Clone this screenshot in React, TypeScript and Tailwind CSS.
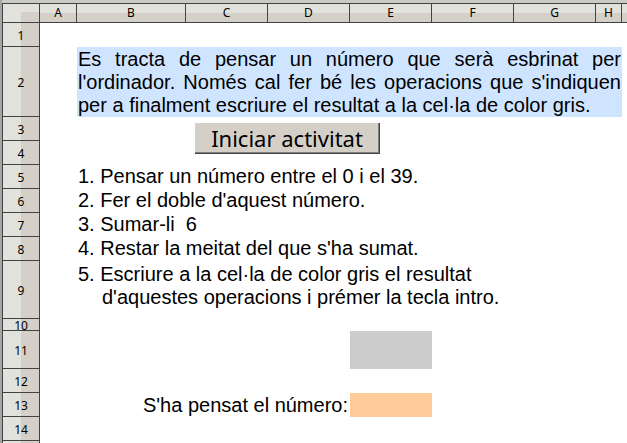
import type { ReactNode } from "react";

const columns = ["A", "B", "C", "D", "E", "F", "G", "H"];

const columnHeader =
  "h-[19px] border-r border-b border-[#424242] p-0 text-center font-normal leading-[18px] bg-linear-to-b from-[#e2e2dc] from-50% to-[#d4d0c8] to-50%";

function Row({
  number,
  height,
  children,
}: {
  number: number;
  height: string;
  children?: ReactNode;
}) {
  return (
    <tr className={height}>
      <th
        scope="row"
        className="border-r border-b border-[#424242] bg-linear-to-r from-[#e2e2dc] from-50% to-[#d4d0c8] to-50% p-0 pt-0.5 text-center align-middle font-normal leading-[9px]"
      >
        {number}
      </th>
      {children}
    </tr>
  );
}

function Step({ children }: { children: ReactNode }) {
  return (
    <>
      <td />
      <td colSpan={7} className="p-0 pl-px align-top whitespace-pre">
        {children}
      </td>
    </>
  );
}

export default function App() {
  return (
    <main className="min-h-screen overflow-hidden border-l-2 border-[#a5a5a5] bg-white text-black">
      <div className="h-[3px] bg-[#cbc9c3]" />
      <table className="w-full table-fixed border-separate border-spacing-0 border-t border-l border-[#424242] font-['Liberation_Sans',Arial,sans-serif] text-[20px] leading-[23px] [&_th]:font-['Noto_Sans',sans-serif] [&_th]:text-[12px]">
        <colgroup>
          <col className="w-[37px]" />
          <col className="w-[37px]" />
          <col className="w-[109px]" />
          <col className="w-[82px]" />
          <col className="w-[82px]" />
          <col className="w-[82px]" />
          <col className="w-[82px]" />
          <col className="w-[82px]" />
          <col className="w-[26px]" />
          <col />
        </colgroup>
        <thead>
          <tr>
            <td className="h-[19px] border-r border-b border-[#424242] bg-[#e2e2dc] p-0">
              <div className="ml-auto mt-2 h-2.5 w-1/2 bg-[#d4d0c8]" />
            </td>
            {columns.map((name) => (
              <th key={name} scope="col" className={columnHeader}>
                {name}
              </th>
            ))}
            <td className="border-b border-[#424242] bg-linear-to-b from-[#e2e2dc] from-50% to-[#d4d0c8] to-50% p-0" />
          </tr>
        </thead>
        <tbody>
          <Row number={1} height="h-6" />
          <Row number={2} height="h-[70px]">
            <td />
            <td colSpan={7} className="bg-[#cfe5ff] p-0 px-px pt-px text-justify align-top">
              Es tracta de pensar un número que serà esbrinat per l'ordinador. Només cal fer bé les
              operacions que s'indiquen per a finalment escriure el resultat a la cel·la de color gris.
            </td>
          </Row>
          <Row number={3} height="h-6">
            <td />
            <td colSpan={7} rowSpan={2} className="p-0 pt-1.5 pl-[118px] align-top">
              <button
                type="button"
                className="block h-[31px] w-[185px] border-r border-b border-[#424242] bg-[#d4d0c8] font-['Noto_Sans',sans-serif] text-[22px] leading-7 whitespace-nowrap shadow-[inset_-1px_-1px_0_#808080]"
              >
                Iniciar activitat
              </button>
            </td>
          </Row>
          <Row number={4} height="h-6" />
          <Row number={5} height="h-6">
            <Step>1. Pensar un número entre el 0 i el 39.</Step>
          </Row>
          <Row number={6} height="h-6">
            <Step>2. Fer el doble d'aquest número.</Step>
          </Row>
          <Row number={7} height="h-6">
            <Step>{"3. Sumar-li  6"}</Step>
          </Row>
          <Row number={8} height="h-6">
            <Step>4. Restar la meitat del que s'ha sumat.</Step>
          </Row>
          <Row number={9} height="h-[58px]">
            <Step>
              <p className="pt-0.5">5. Escriure a la cel·la de color gris el resultat</p>
              <p className="pl-6">d'aquestes operacions i prémer la tecla intro.</p>
            </Step>
          </Row>
          <Row number={10} height="h-3" />
          <Row number={11} height="h-[38px]">
            <td colSpan={4} />
            <td className="p-0">
              <input
                id="result"
                type="text"
                aria-label="Resultat"
                className="block h-[38px] w-full bg-[#cccccc] px-1 text-center outline-none"
              />
            </td>
          </Row>
          <Row number={12} height="h-6" />
          <Row number={13} height="h-6">
            <td />
            <td colSpan={3} className="p-0 pr-0.5 text-right align-middle">
              <label htmlFor="guess">S'ha pensat el número:</label>
            </td>
            <td className="p-0">
              <output id="guess" className="block h-6 bg-[#ffcc99]" />
            </td>
          </Row>
          <Row number={14} height="h-6" />
          <tr className="h-0.5">
            <td className="border-r border-[#424242] bg-linear-to-r from-[#e2e2dc] from-50% to-[#d4d0c8] to-50% p-0" />
          </tr>
        </tbody>
      </table>
    </main>
  );
}
